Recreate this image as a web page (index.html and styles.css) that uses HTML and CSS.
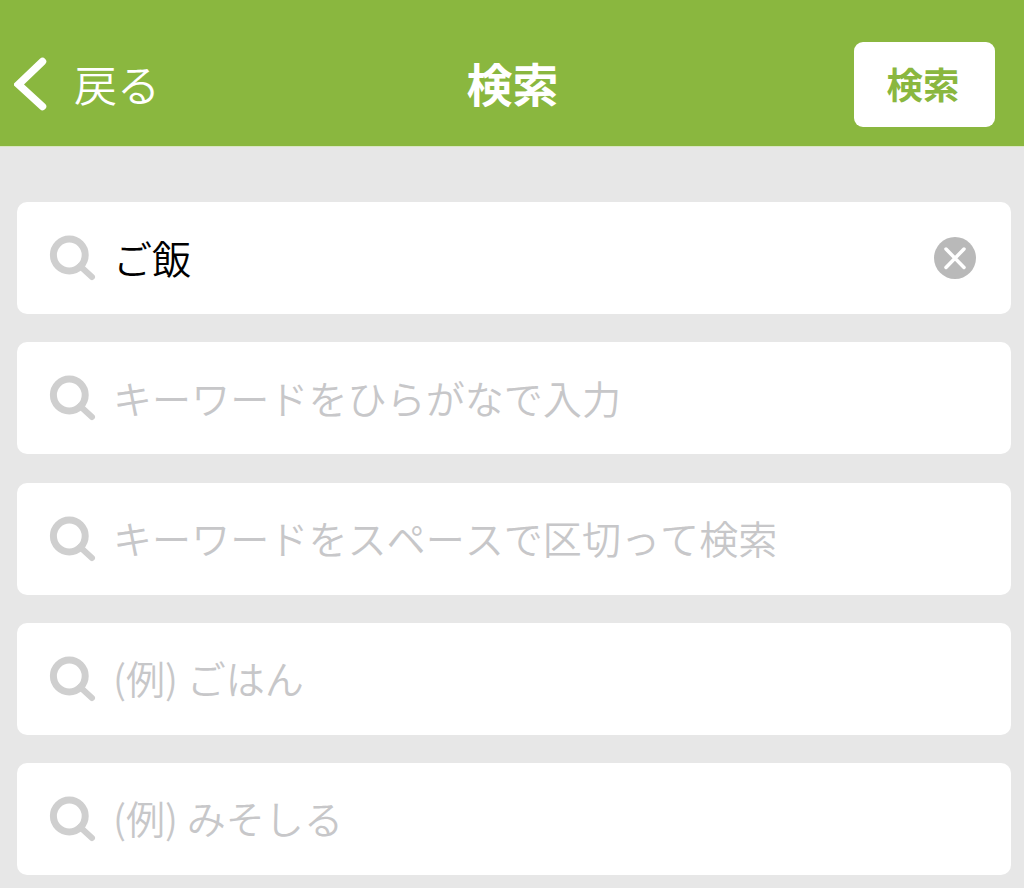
FILE: index.html
```html
<!DOCTYPE html>
<html lang="ja">
<head>
    <meta charset="UTF-8">
    <meta name="viewport" content="width=device-width, initial-scale=1.0">
    <title>検索</title>
    <link rel="stylesheet" href="styles.css">
</head>
<body>

    <svg class="defs">
        <symbol id="search" viewBox="0 0 48 48">
            <circle cx="21.300" cy="21" r="15.900" fill="none" stroke="currentColor" stroke-width="7"/>
            <path d="M32 32L44 43" stroke="currentColor" stroke-width="6" stroke-linecap="round"/>
        </symbol>
    </svg>

    <header class="navbar">
        <div class="back">
            <svg class="chevron" viewBox="0 0 34 56"><path d="M28.500 5.500L4.500 28.500L28.500 50.500" fill="none" stroke="currentColor" stroke-width="7.500" stroke-linecap="round"/></svg>
            <span>戻る</span>
        </div>
        <h1 class="title">検索</h1>
        <button class="submit">検索</button>
    </header>

    <main class="fields">
        <div class="field filled">
            <svg class="icon"><use href="#search"/></svg>
            <span class="text">ご飯</span>
            <svg class="clear" viewBox="0 0 42 42">
                <circle cx="21" cy="21" r="21" fill="#b9b9b9"/>
                <path d="M12 12L30 30.500M30 12L12 30.500" stroke="#fff" stroke-width="3.500" stroke-linecap="round"/>
            </svg>
        </div>
        <div class="field">
            <svg class="icon"><use href="#search"/></svg>
            <span class="text">キーワードをひらがなで入力</span>
        </div>
        <div class="field">
            <svg class="icon"><use href="#search"/></svg>
            <span class="text">キーワードをスペースで区切って検索</span>
        </div>
        <div class="field">
            <svg class="icon"><use href="#search"/></svg>
            <span class="text">(例) ごはん</span>
        </div>
        <div class="field">
            <svg class="icon"><use href="#search"/></svg>
            <span class="text">(例) みそしる</span>
        </div>
    </main>

</body>
</html>
```

FILE: styles.css
```css
* {
    box-sizing: border-box;
}

body {
    margin: 0;
    background: #e7e7e7;
    font-family: "Noto Sans CJK JP", sans-serif;
    font-kerning: none;
    overflow: hidden;
}

.defs {
    display: none;
}

.navbar {
    display: grid;
    grid-template-columns: 1fr auto 1fr;
    align-items: center;
    height: 147px;
    padding: 22px 29px 0 14px;
    border-bottom: 1px solid #d9e6c3;
    background: #8ab73f;
    color: white;
}

.back {
    display: flex;
    align-items: center;
    gap: 26px;
    font-size: 43px;
    font-weight: 350;
    line-height: 60px;
}

.back span {
    padding-bottom: 3px;
}

.chevron {
    width: 34px;
    height: 56px;
}

.title {
    margin: 0 0 0 16px;
    padding-bottom: 4px;
    font-size: 46px;
    font-weight: 700;
    line-height: 60px;
}

.submit {
    justify-self: end;
    width: 141px;
    height: 85px;
    padding: 0 3px 1px 0;
    border: 0;
    border-radius: 9px;
    background: white;
    color: #8ab73f;
    font-family: inherit;
    font-size: 36.5px;
    font-weight: 700;
}

.fields {
    display: flex;
    flex-direction: column;
    gap: 28.1px;
    padding: 55.4px 13px 0 17px;
}

.field {
    display: flex;
    align-items: center;
    height: 112px;
    padding: 0 35px 0 31px;
    border-radius: 10px;
    background: white;
    color: #c7c7c9;
    font-size: 39.1px;
    font-weight: 350;
    line-height: 60px;
}

.icon {
    width: 48px;
    height: 48px;
    margin-right: 17px;
    color: #cfcfcf;
}

.text {
    flex: 1;
    padding-bottom: 3px;
}

.filled .text {
    color: black;
}

.clear {
    width: 42px;
    height: 42px;
}
```
